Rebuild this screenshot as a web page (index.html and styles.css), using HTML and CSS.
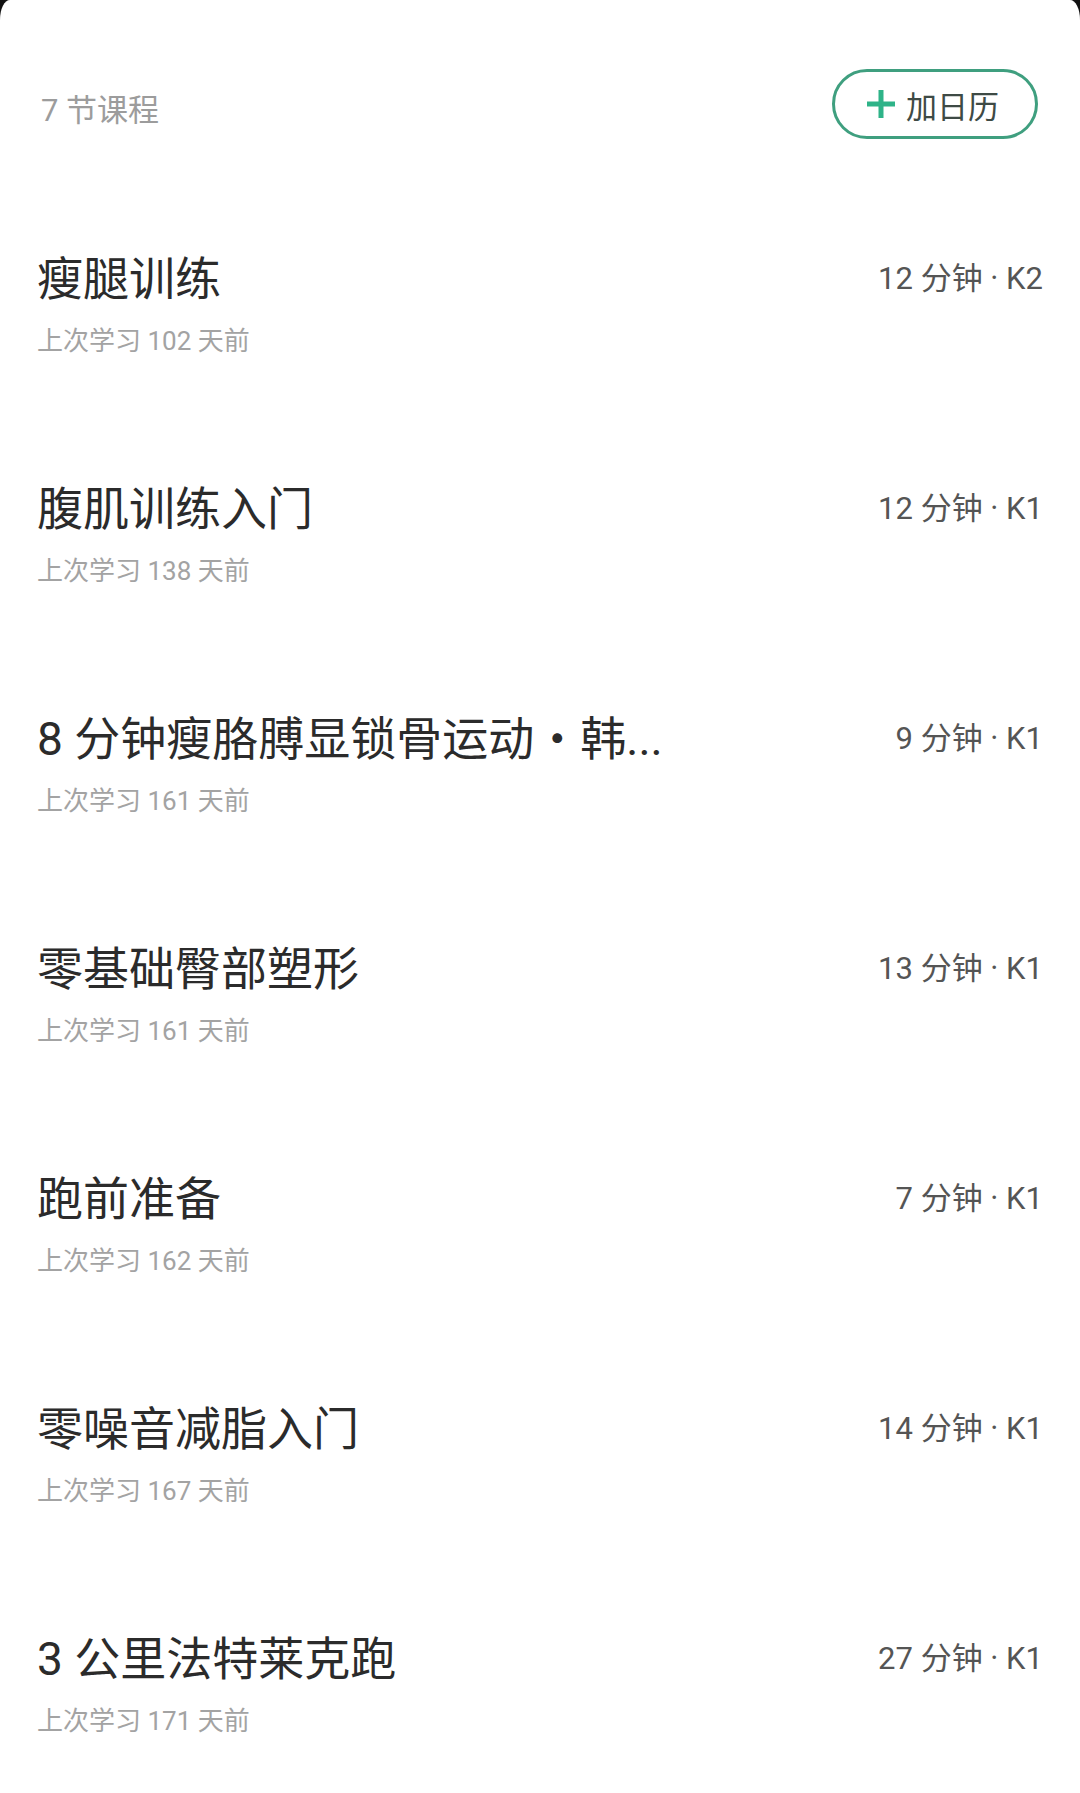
FILE: index.html
```html
<!DOCTYPE html>
<html lang="zh-CN">
<head>
  <meta charset="UTF-8" />
  <meta name="viewport" content="width=device-width, initial-scale=1" />
  <title>课程列表</title>
  <link rel="stylesheet" href="styles.css">
</head>
<body>

  <main class="sheet">

    <!-- Header -->
    <header class="sheet-header">
      <span class="count">7 节课程</span>
      <button class="calendar-btn">
        <svg class="plus" width="32" height="32" viewBox="0 0 32 32">
          <path d="M16 2v28M2 16h28" stroke="#2eb388" stroke-width="5" fill="none" />
        </svg>
        加日历
      </button>
    </header>

    <!-- Course list -->
    <ul class="course-list">
      <li class="course">
        <div class="course-row">
          <span class="course-title">瘦腿训练</span>
          <span class="course-meta">12 分钟 · K2</span>
        </div>
        <p class="course-last">上次学习 102 天前</p>
      </li>
      <li class="course">
        <div class="course-row">
          <span class="course-title">腹肌训练入门</span>
          <span class="course-meta">12 分钟 · K1</span>
        </div>
        <p class="course-last">上次学习 138 天前</p>
      </li>
      <li class="course">
        <div class="course-row">
          <span class="course-title">8 分钟瘦胳膊显锁骨运动・韩...</span>
          <span class="course-meta">9 分钟 · K1</span>
        </div>
        <p class="course-last">上次学习 161 天前</p>
      </li>
      <li class="course">
        <div class="course-row">
          <span class="course-title">零基础臀部塑形</span>
          <span class="course-meta">13 分钟 · K1</span>
        </div>
        <p class="course-last">上次学习 161 天前</p>
      </li>
      <li class="course">
        <div class="course-row">
          <span class="course-title">跑前准备</span>
          <span class="course-meta">7 分钟 · K1</span>
        </div>
        <p class="course-last">上次学习 162 天前</p>
      </li>
      <li class="course">
        <div class="course-row">
          <span class="course-title">零噪音减脂入门</span>
          <span class="course-meta">14 分钟 · K1</span>
        </div>
        <p class="course-last">上次学习 167 天前</p>
      </li>
      <li class="course">
        <div class="course-row">
          <span class="course-title">3 公里法特莱克跑</span>
          <span class="course-meta">27 分钟 · K1</span>
        </div>
        <p class="course-last">上次学习 171 天前</p>
      </li>
    </ul>
  </main>

</body>
</html>
```

FILE: styles.css
```css
* {
  box-sizing: border-box;
}

body {
  margin: 0;
  background: #111;
  font-family: Roboto, "Noto Sans CJK SC", sans-serif;
  color: #2b2b2b;
}

.sheet {
  background: #fff;
  min-height: 100vh;
  border-radius: 10px 10px 0 0 / 20px 20px 0 0;
}

/* Header */
.sheet-header {
  display: flex;
  justify-content: space-between;
  align-items: center;
  padding: 69px 42px 0 41px;
  margin-bottom: 36px;
}

.count {
  margin-top: 7px;
  font-size: 31px;
  color: #9c9c9c;
}

.calendar-btn {
  display: flex;
  align-items: center;
  gap: 9px;
  width: 206px;
  height: 70px;
  padding: 0 0 0 30px;
  border: 3px solid #3f9f7f;
  border-radius: 35px;
  background: #fff;
  font-family: inherit;
  font-size: 31px;
  color: #3e4a45;
  cursor: pointer;
}

/* Course list */
.course-list {
  list-style: none;
  margin: 0;
  padding: 0;
}

.course {
  height: 230px;
  padding: 70px 37px 0 37px;
}

.course-row {
  display: flex;
  justify-content: space-between;
  align-items: center;
  height: 60px;
}

.course-title {
  font-size: 46px;
  color: #2b2b2b;
  white-space: nowrap;
}

.course-meta {
  font-size: 31px;
  color: #555;
}

.course-last {
  margin: 18px 0 0;
  font-size: 26px;
  line-height: 36px;
  color: #a3a3a3;
}
```
